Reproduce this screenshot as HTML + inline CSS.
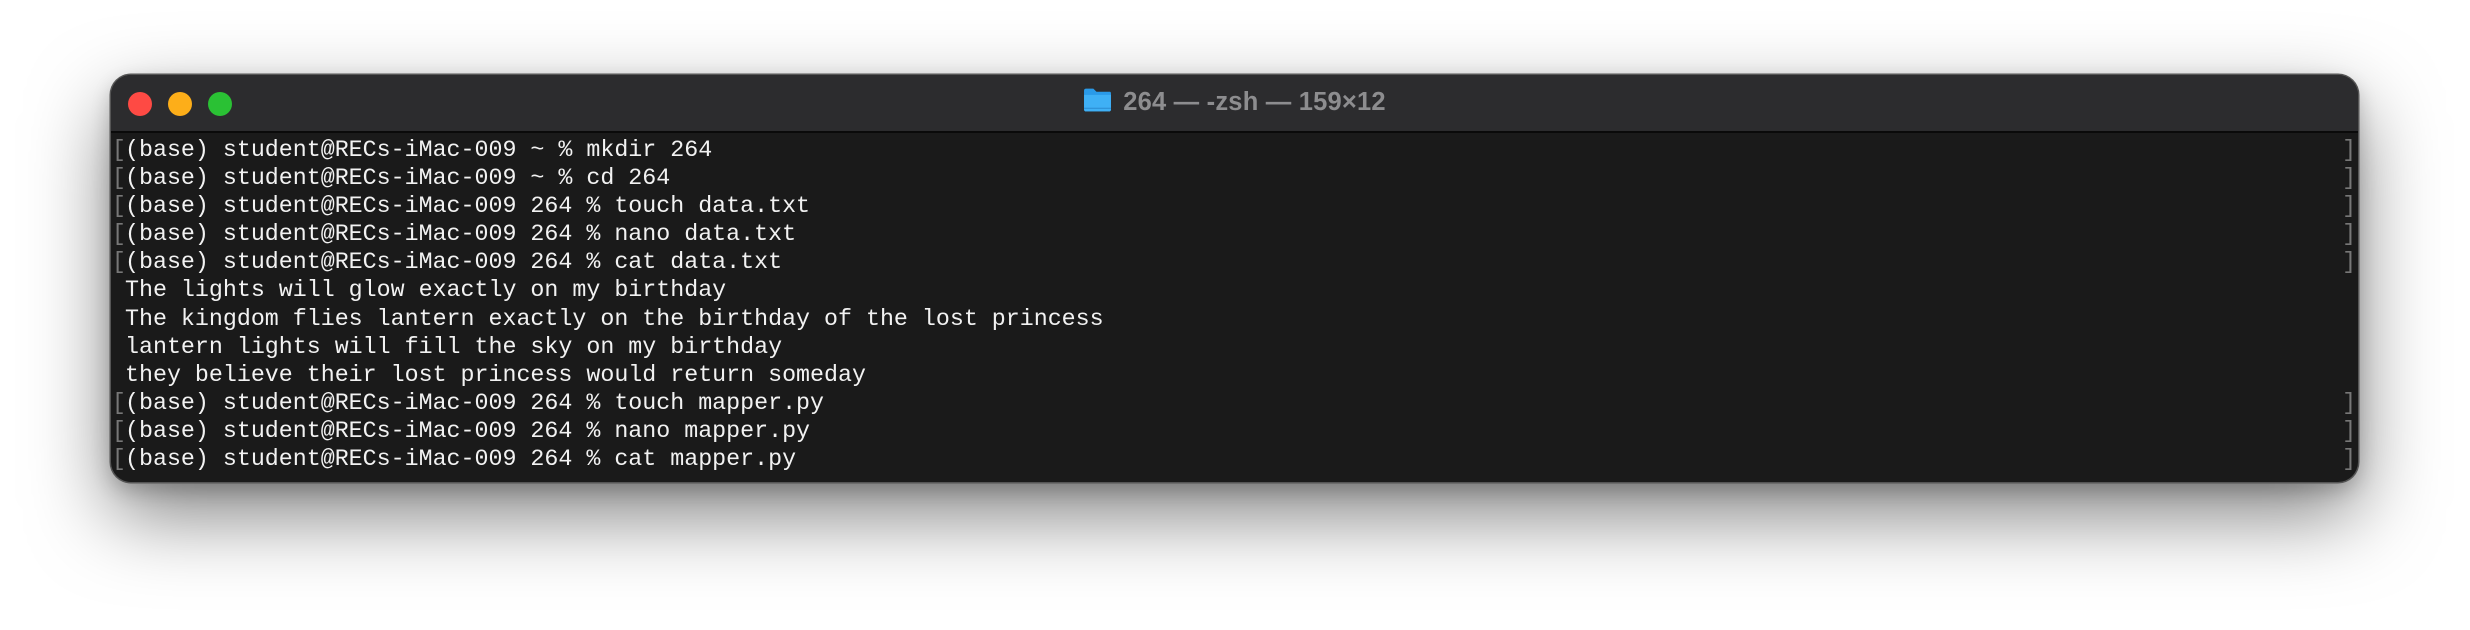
<!DOCTYPE html>
<html><head><meta charset="utf-8"><style>
html,body{margin:0;padding:0;background:#fff;width:2470px;height:630px;overflow:hidden}
.win{position:absolute;left:111px;top:75px;width:2247px;height:407px;border-radius:20px;background:#1a1a1a;box-shadow:0 0 0 1.5px #555,0 32px 80px rgba(0,0,0,0.5),0 8px 20px rgba(0,0,0,0.2);overflow:hidden}
.tb{position:absolute;left:0;top:0;right:0;height:56px;background:#2c2c2e;border-bottom:2px solid #0a0a0a}
.dot{position:absolute;top:17px;width:24px;height:24px;border-radius:50%}
.title{position:absolute;left:0;right:0;top:12px;text-align:center;font:bold 25.5px "Liberation Sans",sans-serif;color:#8d8d8f;letter-spacing:0.2px}
.folder{display:inline-block;vertical-align:-3px;width:29px;height:26px;margin-right:11px;position:relative}
.term{position:absolute;left:0;top:61px;right:0}
.row{position:relative;height:28.1px;font:23.3px/28.1px "Liberation Mono",monospace;color:#f2f2f2;white-space:pre;padding-left:14px}
.lb,.rb{position:absolute;top:0;color:#777;font-size:23px}
.lb{left:1px}
.rb{right:2px}
</style></head><body>
<div class="win">
 <div class="tb">
  <div class="dot" style="left:17px;background:#fe4a44"></div>
  <div class="dot" style="left:57px;background:#fdae19"></div>
  <div class="dot" style="left:97px;background:#2ac134"></div>
  <div class="title"><span class="folder"><svg width="29" height="26" viewBox="0 0 28 24"><path d="M1 3 Q1 1 3 1 H10 L13 4 H26 Q27 4 27 6 V21 Q27 23 25 23 H3 Q1 23 1 21 Z" fill="#2a9ae8"/><path d="M1 7 H27 V21 Q27 23 25 23 H3 Q1 23 1 21 Z" fill="#3fb0f5"/><path d="M1 20 H27" stroke="#2a8ad0" stroke-width="1"/></svg></span>264 — -zsh — 159×12</div>
 </div>
 <div class="term">
  <div class="row"><span class="lb">[</span>(base) student@RECs-iMac-009 ~ % mkdir 264<span class="rb">]</span></div>
  <div class="row"><span class="lb">[</span>(base) student@RECs-iMac-009 ~ % cd 264<span class="rb">]</span></div>
  <div class="row"><span class="lb">[</span>(base) student@RECs-iMac-009 264 % touch data.txt<span class="rb">]</span></div>
  <div class="row"><span class="lb">[</span>(base) student@RECs-iMac-009 264 % nano data.txt<span class="rb">]</span></div>
  <div class="row"><span class="lb">[</span>(base) student@RECs-iMac-009 264 % cat data.txt<span class="rb">]</span></div>
  <div class="row">The lights will glow exactly on my birthday</div>
  <div class="row">The kingdom flies lantern exactly on the birthday of the lost princess</div>
  <div class="row">lantern lights will fill the sky on my birthday</div>
  <div class="row">they believe their lost princess would return someday</div>
  <div class="row"><span class="lb">[</span>(base) student@RECs-iMac-009 264 % touch mapper.py<span class="rb">]</span></div>
  <div class="row"><span class="lb">[</span>(base) student@RECs-iMac-009 264 % nano mapper.py<span class="rb">]</span></div>
  <div class="row"><span class="lb">[</span>(base) student@RECs-iMac-009 264 % cat mapper.py<span class="rb">]</span></div>
 </div>
</div>
</body></html>
